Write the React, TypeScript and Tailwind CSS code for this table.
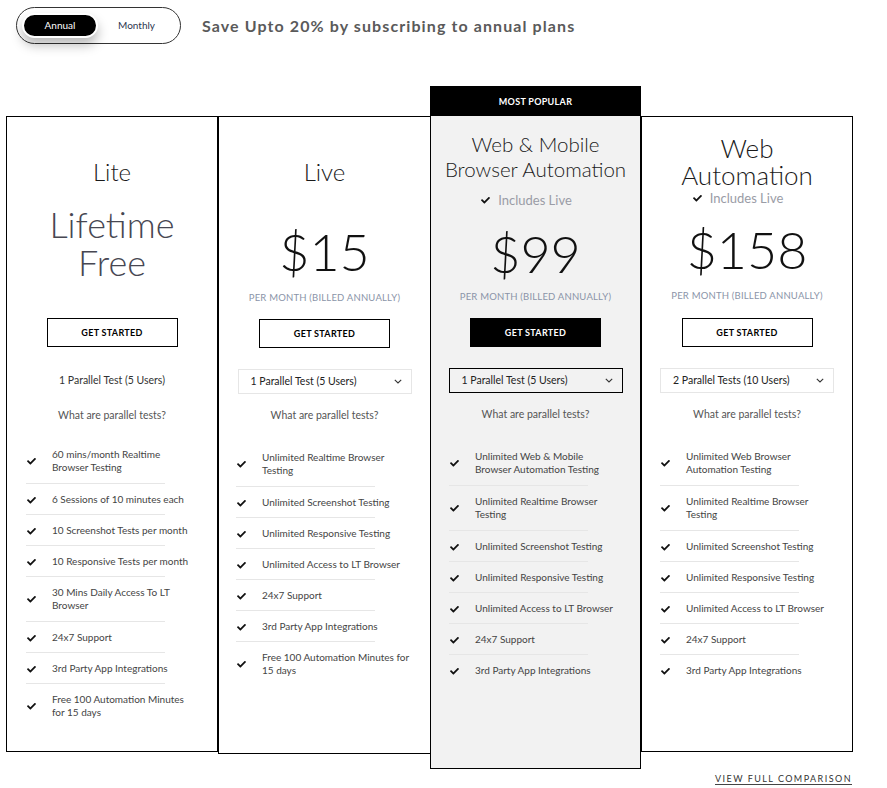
import React from "react";

const Check = () => (
  <svg width="9" height="8" viewBox="0 0 512 420" className="shrink-0">
    <path
      fill="#111"
      d="M173.9 410.1L7.5 243.7c-10-10-10-26.2 0-36.2l36.2-36.2c10-10 26.2-10 36.2 0L192 283.4 432.1 43.3c10-10 26.2-10 36.2 0l36.2 36.2c10 10 10 26.2 0 36.2L210.1 410.1c-10 10-26.2 10-36.2 0z"
    />
  </svg>
);

const Chevron = () => (
  <svg width="8" height="5" viewBox="0 0 8 5" className="shrink-0">
    <polyline points="0.8,0.8 4,4 7.2,0.8" fill="none" stroke="#333" strokeWidth="1.1" />
  </svg>
);

type Feat = string[];

const FeatureList = ({ items, ml }: { items: Feat[]; ml: string }) => (
  <ul className={`mt-[20px] self-start ${ml} w-[139px]`}>
    {items.map((lines, i) => (
      <li
        key={i}
        className={`flex items-center pt-[9px] ${lines.length > 1 ? "pb-[9px]" : "pb-[8px]"} ${
          i < items.length - 1 ? "border-b border-[#e6e6e6]" : ""
        }`}
      >
        <div className="w-[26px] shrink-0 flex items-center pl-[1px]">
          <Check />
        </div>
        <span className="whitespace-nowrap text-[10px] leading-[13px] text-[#444]">
          {lines.map((l, j) => (
            <React.Fragment key={j}>
              {j > 0 && <br />}
              {l}
            </React.Fragment>
          ))}
        </span>
      </li>
    ))}
  </ul>
);

const Button = ({ dark }: { dark?: boolean }) => (
  <div
    className={`mt-[9px] w-[131px] h-[29px] flex items-center justify-center border border-black text-[9px] font-bold tracking-[0.3px] ${
      dark ? "bg-black text-white" : "bg-white text-black"
    }`}
  >
    GET STARTED
  </div>
);

const Select = ({ label, dark }: { label: string; dark?: boolean }) => (
  <div
    className={`mt-[21px] w-[174px] h-[25px] flex items-center justify-between pl-[12px] pr-[9px] border ${
      dark ? "border-black" : "border-[#e6e6e6]"
    } text-[10.5px] text-[#222]`}
  >
    <span>{label}</span>
    <Chevron />
  </div>
);

const What = () => (
  <div className="mt-[15px] text-[10.5px] leading-[13px] text-[#555]">What are parallel tests?</div>
);

const PerMonth = ({ mt }: { mt: string }) => (
  <div className={`${mt} text-[9.5px] leading-[12px] tracking-[0.2px] text-[#8a94a8]`}>
    PER MONTH (BILLED ANNUALLY)
  </div>
);

const Includes = ({ mt }: { mt: string }) => (
  <div className={`${mt} mr-[18px] flex items-center gap-[8px] h-[16px]`}>
    <Check />
    <span className="text-[13px] leading-[16px] text-[#9a9ca6]">Includes Live</span>
  </div>
);

const liveFeats: Feat[] = [
  ["Unlimited Realtime Browser", "Testing"],
  ["Unlimited Screenshot Testing"],
  ["Unlimited Responsive Testing"],
  ["Unlimited Access to LT Browser"],
  ["24x7 Support"],
  ["3rd Party App Integrations"],
  ["Free 100 Automation Minutes for", "15 days"],
];

const liteFeats: Feat[] = [
  ["60 mins/month Realtime", "Browser Testing"],
  ["6 Sessions of 10 minutes each"],
  ["10 Screenshot Tests per month"],
  ["10 Responsive Tests per month"],
  ["30 Mins Daily Access To LT", "Browser"],
  ["24x7 Support"],
  ["3rd Party App Integrations"],
  ["Free 100 Automation Minutes", "for 15 days"],
];

const mobileFeats: Feat[] = [
  ["Unlimited Web & Mobile", "Browser Automation Testing"],
  ["Unlimited Realtime Browser", "Testing"],
  ["Unlimited Screenshot Testing"],
  ["Unlimited Responsive Testing"],
  ["Unlimited Access to LT Browser"],
  ["24x7 Support"],
  ["3rd Party App Integrations"],
];

const webFeats: Feat[] = [
  ["Unlimited Web Browser", "Automation Testing"],
  ["Unlimited Realtime Browser", "Testing"],
  ["Unlimited Screenshot Testing"],
  ["Unlimited Responsive Testing"],
  ["Unlimited Access to LT Browser"],
  ["24x7 Support"],
  ["3rd Party App Integrations"],
];

export default function App() {
  return (
    <div className="w-[887px] h-[788px] bg-white font-['Lato',sans-serif] text-[#222] overflow-hidden">
      {/* top bar */}
      <div className="flex items-center pt-[7px] pl-[16px]">
        <div className="w-[165px] h-[37px] rounded-full border border-[#333] flex items-center pl-[5px]">
          <div className="w-[76px] h-[25px] rounded-full bg-black border-2 border-white shadow-[0_7px_12px_rgba(0,0,0,0.28)] flex items-center justify-center text-white text-[10px]">
            Annual
          </div>
          <div className="ml-[20px] text-[10px] text-[#2c3550]">Monthly</div>
        </div>
        <div className="ml-[21px] text-[16px] font-bold text-[#5a5a5a] tracking-[1.1px]">
          Save Upto 20% by subscribing to annual plans
        </div>
      </div>

      {/* cards */}
      <div className="flex items-start mt-[42px] pl-[6px]">
        {/* Lite */}
        <div className="mt-[30px] w-[212px] h-[636px] border border-black bg-white flex flex-col items-center">
          <div className="h-[192px] w-full flex flex-col items-center">
            <div className="mt-[41px] text-[24px] leading-[28px] font-light text-[#1a1a1a]">Lite</div>
            <div className="mt-[19px] text-[36px] leading-[38px] font-light text-[#474752] text-center">
              Lifetime
              <br />
              Free
            </div>
          </div>
          <Button />
          <div className="mt-[21px] h-[25px] flex items-center text-[10.5px] text-[#333]">1 Parallel Test (5 Users)</div>
          <div className="mt-[1px]">
            <What />
          </div>
          <div className="-mt-[3px] self-stretch flex">
            <FeatureList items={liteFeats} ml="ml-[19px]" />
          </div>
        </div>

        {/* Live */}
        <div className="mt-[30px] w-[213px] h-[638px] border border-black bg-white flex flex-col items-center">
          <div className="h-[193px] w-full flex flex-col items-center">
            <div className="mt-[41px] text-[24px] leading-[28px] font-light text-[#1a1a1a]">Live</div>
            <div className="mt-[39px] text-[52px] leading-[52px] font-light text-[#111]">$15</div>
            <PerMonth mt="mt-[15px]" />
          </div>
          <Button />
          <Select label="1 Parallel Test (5 Users)" />
          <What />
          <FeatureList items={liveFeats} ml="ml-[17px]" />
        </div>

        {/* Web & Mobile */}
        <div className="-ml-[1px] w-[211px] h-[683px] border border-black bg-[#f2f2f2] flex flex-col items-center">
          <div className="w-full h-[29px] bg-black flex items-center justify-center text-white text-[9px] font-bold tracking-[0.3px]">
            MOST POPULAR
          </div>
          <div className="h-[193px] w-full flex flex-col items-center">
            <div className="mt-[16px] text-[20.5px] leading-[25px] font-light text-[#1a1a1a] text-center whitespace-nowrap">
              Web &amp; Mobile
              <br />
              Browser Automation
            </div>
            <Includes mt="mt-[10px]" />
            <div className="mt-[19px] text-[52px] leading-[52px] font-light text-[#111]">$99</div>
            <PerMonth mt="mt-[12px]" />
          </div>
          <Button dark />
          <Select label="1 Parallel Test (5 Users)" dark />
          <What />
          <FeatureList items={mobileFeats} ml="ml-[18px]" />
        </div>

        {/* Web Automation */}
        <div className="mt-[30px] w-[212px] h-[636px] border border-black bg-white flex flex-col items-center">
          <div className="h-[192px] w-full flex flex-col items-center">
            <div className="mt-[18px] text-[26px] leading-[27px] font-light text-[#1a1a1a] text-center">
              Web
              <br />
              Automation
            </div>
            <Includes mt="mt-[1px]" />
            <div className="mt-[17px] text-[52px] leading-[52px] font-light text-[#111]">$158</div>
            <PerMonth mt="mt-[15px]" />
          </div>
          <Button />
          <Select label="2 Parallel Tests (10 Users)" />
          <What />
          <FeatureList items={webFeats} ml="ml-[18px]" />
        </div>
      </div>

      <div className="flex justify-end pr-[35px] mt-[4px]">
        <span className="text-[9px] leading-[11px] tracking-[1.45px] border-b border-[#444] text-[#333]">
          VIEW FULL COMPARISON
        </span>
      </div>
    </div>
  );
}
